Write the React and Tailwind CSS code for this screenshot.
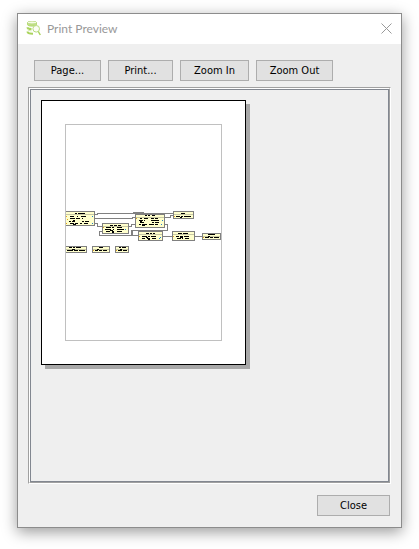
import React from 'react';

const tables = [
  {
    x: 65, y: 211, w: 30, h: 15,
    text: 'M10 2.5h2m1 0h7M5 5.5h4m3 0h1m3 0h5M5 7.5h5m1 0h4m2 0h1M4 10.5h2m1 0h3m7 0h2m1 0h4M5 12.5h4m1 0h3m2 0h2m2 0h4M8 9.5h2M8 13.5h3',
    keys: [[1, 5], [2, 8], [1, 12]],
    refs: [[27, 5], [27, 12]],
  },
  {
    x: 102, y: 223, w: 27, h: 11,
    text: 'M8 2.5h3m1 0h3m1 0h3M4 4.5h5m1 0h2m3 0h5M3 6.5h6m2 0h1m3 0h7M4 8.5h4m2 0h2m3 0h5M8 7.5h3M10 9.5h2',
    keys: [[1, 4]],
    refs: [[23, 6]],
  },
  {
    x: 135, y: 214, w: 30, h: 14,
    text: 'M10 1.5h2m1 0h2m2 0h3M5 4.5h2m2 0h4m3 0h3m1 0h3M4 6.5h4m1 0h1m6 0h8M5 8.5h4m8 0h2m1 0h4M4 10.5h2m1 0h5m2 0h5m1 0h3M7 11.5h3M5 7.500h2',
    keys: [[1, 4]],
    refs: [[27, 6], [26, 10]],
  },
  {
    x: 173, y: 211, w: 21, h: 8,
    text: 'M8 2.5h4M3 5.5h4m1 0h2m1 0h7M7 6.5h2',
    keys: [[1, 5]],
    refs: [],
  },
  {
    x: 138, y: 231, w: 25, h: 10,
    text: 'M8 2.5h3m1 0h2m1 0h2M4 5.5h5m1 0h2m1 0h5M4 7.5h3m2 0h3m2 0h4M8 6.5h2M10 8.5h2',
    keys: [[1, 5]],
    refs: [[21, 7], [22, 6]],
  },
  {
    x: 172, y: 231, w: 23, h: 10,
    text: 'M6 2.5h4m1 0h5M4 5.5h3m1 0h3m1 0h5M5 7.5h4m1 0h1m2 0h4M8 6.5h3',
    keys: [[1, 5]],
    refs: [],
  },
  {
    x: 202, y: 233, w: 19, h: 7,
    text: 'M6 1.5h7M3 4.5h4m1 0h3m1 0h5M6 3.5h2',
    keys: [[1, 4]],
    refs: [],
  },
  {
    x: 65, y: 246, w: 22, h: 7,
    text: 'M4 1.5h3m1 0h2m1 0h5M2 4.5h6m1 0h4m1 0h6M7 3.5h3',
    keys: [],
    refs: [],
  },
  {
    x: 92, y: 246, w: 18, h: 7,
    text: 'M7 1.5h4M3 4.5h3m1 0h3m1 0h4M5 3.5h2',
    keys: [[1, 4]],
    refs: [],
  },
  {
    x: 115, y: 246, w: 14, h: 7,
    text: 'M4 1.5h2m1 0h4M3 4.5h4m1 0h4M5 3.5h2',
    keys: [[1, 4]],
    refs: [],
  },
];

const links = [
  'M95 214.5H97V213.5H173',
  'M95 218.5H132V217.5H135',
  'M95 223.5H97.5V226.5H102',
  'M129 226.5H131.5V224.5H135',
  'M102 231.5H99.5V235.5H138',
  'M165 224.5H167.5V230.5H132',
  'M165 217.5H170V215.5H173',
  'M163 236.5H172',
  'M195 236.5H202',
];

function Diagram() {
  return (
    <svg viewBox="66 125 155 215" className="block h-[215px] w-[155px]" shapeRendering="crispEdges">
      {links.map((d) => (
        <path key={d} d={d} fill="none" stroke="#808080" />
      ))}
      <rect x="133" y="212" width="11" height="2" fill="#808080" />
      <rect x="131" y="230" width="2" height="6" fill="#808080" />
      {tables.map((t) => (
        <g key={`${t.x}-${t.y}`} transform={`translate(${t.x} ${t.y})`}>
          <rect x="0.5" y="0.5" width={t.w - 1} height={t.h - 1} fill="#ffffcc" stroke="#808080" />
          <path d={`M1 3.5h${t.w - 2}`} stroke="#c8c8a4" />
          <path d={t.text} stroke="#000" />
          {t.keys.map(([x, y]) => (
            <rect key={`${x}-${y}`} x={x} y={y} width="1" height="1" fill="#e8a818" />
          ))}
          {t.refs.map(([x, y]) => (
            <rect key={`${x}-${y}`} x={x} y={y} width="1" height="1" fill="#2080d0" />
          ))}
        </g>
      ))}
    </svg>
  );
}

function Logo() {
  return (
    <svg viewBox="0 0 16 16" className="h-4 w-4" fill="none">
      <path d="M1.500 1.500v2c0 1 2 1.600 4.500 1.600s4.500-.6 4.500-1.600v-2" fill="#c3e08a" stroke="#b1d86c" />
      <ellipse cx="6" cy="1.500" rx="4.500" ry="1.500" fill="#f6fbe8" stroke="#b9dc80" />
      <path d="M1.500 6.200c0 1.200 1.500 1.800 4 1.900M1.500 10.500c0 1.500 2 2.200 5.500 2.200" stroke="#a9d35c" strokeWidth="2" />
      <path d="M1.500 8.700c1 .8 2 1 4 1.100" stroke="#d3eaa5" />
      <circle cx="10.200" cy="7.800" r="3.300" fill="#fbfdf5" stroke="#b9dc80" />
      <path d="M12.300 10.500l2 3.500" stroke="#a9d35c" strokeWidth="1.500" />
    </svg>
  );
}

function Button({ children, className = '' }) {
  return (
    <button
      type="button"
      className={`h-[21px] border border-[#adadad] bg-[#e1e1e1] text-[11px] leading-[19px] whitespace-nowrap text-black ${className}`}
    >
      {children}
    </button>
  );
}

export default function App() {
  return (
    <div className="h-screen bg-white px-[17px] pt-[13px] pb-[21px] font-['DejaVu_Sans_Condensed','DejaVu_Sans',sans-serif]">
      <div className="flex h-full flex-col border border-[#8c8c8c] bg-[#efefef] shadow-[0_4px_14px_rgba(0,0,0,0.4)]">
        <header className="flex h-[30px] items-center bg-white pr-[9px] pl-2">
          <Logo />
          <h1 className="ml-[5px] flex-1 font-['Lato',sans-serif] text-[12px] leading-4 text-[#999]">
            Print Preview
          </h1>
          <button type="button" aria-label="Close window" className="pb-[2px]">
            <svg viewBox="0 0 11 11" className="h-[11px] w-[11px]" stroke="#999">
              <path d="M.5 .5l10 10M10.500 .5l-10 10" />
            </svg>
          </button>
        </header>

        <main className="flex flex-1 flex-col px-[10px] pt-4 pb-[11px]">
          <div className="flex gap-[7px] px-[6px]">
            <Button className="w-[67px]">Page...</Button>
            <Button className="w-[65px]">Print...</Button>
            <Button className="w-[69px]">Zoom In</Button>
            <Button className="w-[77px]">Zoom Out</Button>
          </div>

          <div className="mt-[6px] flex flex-1 border border-[#a0a0a0] border-r-white border-b-white">
            <div className="flex flex-1 border border-white border-r-[#a0a0a0] border-b-[#a0a0a0]">
              <div className="flex flex-1 items-start border border-[#828790] p-[10px]">
                <div className="border border-black bg-white p-[23px] shadow-[4px_4px_0_#a8a8a8]">
                  <div className="border border-[#c0c0c0]">
                    <Diagram />
                  </div>
                </div>
              </div>
            </div>
          </div>

          <div className="mt-[11px] flex justify-end pr-px">
            <Button className="w-[73px]">Close</Button>
          </div>
        </main>
      </div>
    </div>
  );
}
